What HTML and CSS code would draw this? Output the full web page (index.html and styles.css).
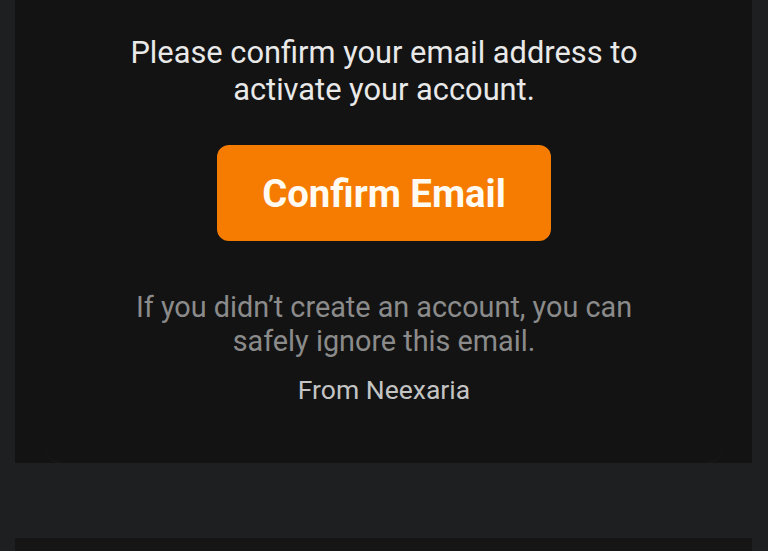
FILE: index.html
```html
<!DOCTYPE html>
<html lang="en">
<head>
  <meta charset="UTF-8">
  <title>Confirm your email</title>
  <meta name="viewport" content="width=device-width, initial-scale=1.0">
  <link rel="stylesheet" href="styles.css">
</head>
<body>
  <div class="mail-column">
    <div class="mail-card">
      <p class="lead">Please confirm your email address to activate your account.</p>
      <a class="confirm-btn" href="#">Confirm Email</a>
      <p class="note">If you didn’t create an account, you can safely ignore this email.</p>
      <p class="sign">From Neexaria</p>
    </div>
  </div>
  <div class="footer-band"></div>
  <div class="mail-column next"></div>
</body>
</html>
```

FILE: styles.css
```css
* { box-sizing: border-box; margin: 0; padding: 0; }
body {
  font-family: 'Roboto', 'Liberation Sans', sans-serif;
  background: #1e1f21;
  height: 100vh;
  overflow: hidden;
}

.mail-column {
  margin: 0 16px 0 15px;
  background: #131313;
  padding: 0 29px 0 30px;
}

.mail-card {
  background: #131313;
  border-radius: 0 0 18px 18px;
  box-shadow: 0 1px 0 0 rgba(255,255,255,0.04);
  display: flex;
  flex-direction: column;
  align-items: center;
  text-align: center;
  padding: 34px 40px 0;
  height: 463px;
}

.lead {
  color: #e9e9e9;
  font-size: 30.8px;
  line-height: 37px;
  max-width: 560px;
}

.confirm-btn {
  margin-top: 37px;
  width: 334px;
  height: 96px;
  border-radius: 12px;
  background: #f57c00;
  color: #fffaf2;
  font-weight: bold;
  font-size: 38.3px;
  text-decoration: none;
  display: flex;
  justify-content: center;
  align-items: center;
}

.note {
  margin-top: 49px;
  color: #8b8b8b;
  font-size: 28.8px;
  line-height: 34px;
  max-width: 540px;
}

.sign {
  margin-top: 15px;
  color: #c4c4c4;
  font-size: 26.5px;
  line-height: 34px;
}

.footer-band {
  height: 75px;
  background: #1e1f21;
}

.mail-column.next {
  height: 40px;
  background: #151516;
}
```
